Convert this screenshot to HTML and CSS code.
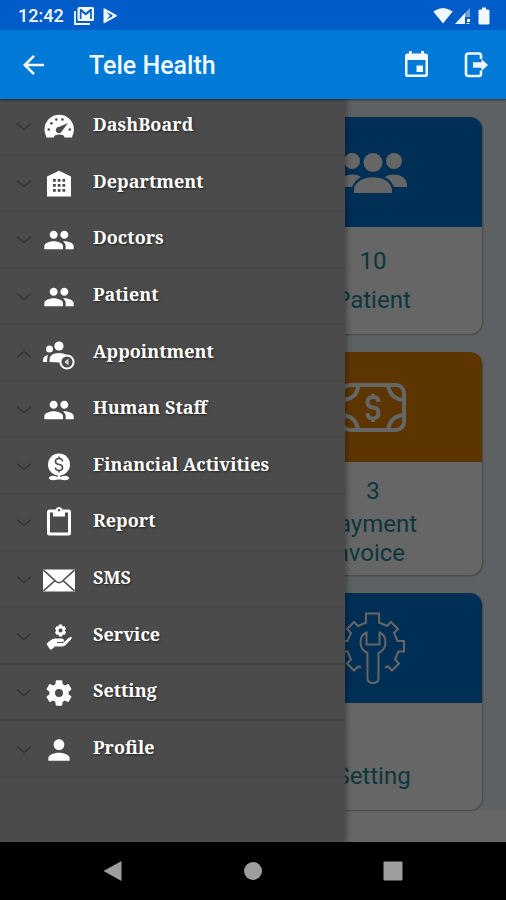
FILE: index.html
```html
<!DOCTYPE html>
<html lang="en">
<head>
<meta charset="utf-8">
<meta name="viewport" content="width=device-width, initial-scale=1">
<title>Tele Health</title>
<link rel="stylesheet" href="styles.css">
</head>
<body>
<svg class="symbols" aria-hidden="true">
  <symbol id="down" viewBox="0 0 16 10"><path d="M1 1.5l7 6 7-6" fill="none" stroke="currentColor" stroke-width="1.6"/></symbol>
  <symbol id="up" viewBox="0 0 16 10"><path d="M1 8.5l7-6 7 6" fill="none" stroke="currentColor" stroke-width="1.6"/></symbol>
  <symbol id="group" viewBox="0 0 24 24"><path d="M16 11c1.66 0 2.99-1.34 2.99-3S17.66 5 16 5c-1.66 0-3 1.34-3 3s1.34 3 3 3zm-8 0c1.66 0 2.99-1.34 2.99-3S9.66 5 8 5C6.34 5 5 6.34 5 8s1.34 3 3 3zm0 2c-2.33 0-7 1.17-7 3.5V19h14v-2.5c0-2.33-4.67-3.5-7-3.5zm8 0c-.29 0-.62.02-.97.05 1.16.84 1.97 1.97 1.97 3.45V19h6v-2.5c0-2.33-4.67-3.5-7-3.5z"/></symbol>
</svg>

<header class="top">
  <div class="status">
    <span class="clock">12:42</span>
    <svg class="status-icon" viewBox="0 0 20 18"><path d="M1 4v13h15" fill="none" stroke="currentColor" stroke-width="1.8"/><path fill-rule="evenodd" d="M5 0h13.500q1.500 0 1.500 1.500v11q0 1.500-1.500 1.500h-13.500q-1.500 0-1.500-1.500v-11q0-1.500 1.500-1.500zM5.800 2v10h1.700v-7l4.300 3.600 4.300-3.600v7h1.700v-10h-1.500l-4.500 3.800-4.500-3.800z"/></svg>
    <svg class="status-icon play" viewBox="0 0 16 18"><path fill-rule="evenodd" d="M1.500 2q0-1.200 1.200-.6l11.800 6.600q1 .7 0 1.400l-11.800 6.700q-1.200.6-1.200-.6zM4.500 5l3.500 3.800-3.500 3.700 5-2.500 1.200-1.200-1.200-1.300z"/></svg>
    <span class="spacer"></span>
    <svg class="status-icon wifi" viewBox="0 0 20 18"><path d="M10 16.500L.3 4.500Q10-2.500 19.700 4.500z"/></svg>
    <svg class="status-icon signal" viewBox="0 0 16 18"><path opacity=".45" d="M15 1v9h-5V6z"/><path d="M10 6v11H0zM12 12h3v3h-3zM11.500 16h3v1h-3z"/></svg>
    <svg class="status-icon battery" viewBox="0 0 12 18"><path d="M4 .5h4v2h2q1.500 0 1.500 1.500v12q0 1.500-1.500 1.500h-8q-1.500 0-1.500-1.500v-12q0-1.500 1.500-1.500h2z"/></svg>
  </div>
  <div class="app-bar">
    <button class="icon-button" type="button" aria-label="Back"><svg viewBox="0 0 28 28"><path d="M24 14H5.500M14 4.800L4.800 14l9.200 9.200" fill="none" stroke="currentColor" stroke-width="2.600"/></svg></button>
    <h1>Tele Health</h1>
    <button class="icon-button" type="button" aria-label="Calendar"><svg viewBox="0 0 28 28"><path fill-rule="evenodd" d="M7 0h2.800v2.500h9.400V0H22v2.500h1.500q2.500 0 2.500 2.500v18.500q0 2.500-2.500 2.500h-18q-2.500 0-2.500-2.500V5q0-2.500 2.500-2.500H7zM5.500 9v14.500h18V9z"/><path d="M14.500 14.500h6.500v6.500h-6.500z"/></svg></button>
    <button class="icon-button" type="button" aria-label="Log out"><svg viewBox="0 0 28 28"><path d="M19 8V5q0-2.500-2-2.500H6.500Q4 2.500 4 5v17.500q0 2.500 2.500 2.500H17q2 0 2-2.500v-3" fill="none" stroke="currentColor" stroke-width="2.600"/><path d="M11 11.200h8.500V8l6.500 6-6.500 6v-3.200H11z"/></svg></button>
  </div>
</header>

<main class="screen">
  <section class="dashboard">
    <article class="card">
      <div class="card-head"><svg viewBox="0 0 72 72"><circle cx="15" cy="25" r="8"/><circle cx="57" cy="25" r="8"/><circle cx="36" cy="26.500" r="9.500"/><path d="M17 57v-3c1-17 37-17 38 0v3zM2 51v-3c1-9 14-12 22-7q-6 3-9 10zM70 51v-3c-1-9-14-12-22-7q6 3 9 10z"/></svg></div>
      <div class="card-body"><strong>10</strong><span>Patient</span></div>
    </article>
    <article class="card tall">
      <div class="card-head orange"><svg class="line bold" viewBox="0 0 72 72"><rect x="5" y="14" width="62" height="45" rx="8"/><path d="M21 14q0 14-16 15M51 14q2 14 16 15M5 44q14 1 16 15M67 44q-14 1-16 15"/><path d="M41.500 31q0-5-5.500-5t-5.500 5 5.500 5.500 5.500 5.500-5.500 5.500-5.500-5.500M36 23v4M36 47v4"/></svg></div>
      <div class="card-body"><strong>3</strong><span>Payment&nbsp;<br>Invoice&nbsp;&nbsp;</span></div>
    </article>
    <article class="card">
      <div class="card-head"><svg class="line" viewBox="0 0 72 72"><path d="M24 55.500l-3-1-4 4-7-7 4-4-3.500-8H5V29h5.500l3.500-8-4-4 7-7 4 4 8-3.500V1.500h13V10.500l8 3.500 4-4 7 7-4 4 3.500 8H67v10.500h-5.500l-3.500 8 4 4-7 7-4-4-3 1"/><path d="M30.500 41v25q0 5 5.500 5t5.500-5V41q7-3 7-11 0-7-6-9.500v12h-13v-12q-6 2.500-6 9.500 0 8 7 11z"/></svg></div>
      <div class="card-body"><strong></strong><span>Setting</span></div>
    </article>
  </section>
  <div class="scrim"></div>

  <nav class="drawer" aria-label="Main menu">
    <ul class="menu">
      <li><button type="button"><svg class="chevron"><use href="#down"/></svg><svg class="icon" viewBox="0 0 32 32"><path fill-rule="evenodd" d="M3.500 26.500Q1.500 22 1.500 18.500a14.700 14.700 0 0 1 29.400 0q0 3.500-2 8h-7.400q0-3-5.300-3t-5.300 3zM25 12l-8.500 3.700a3.200 3.200 0 1 0 2.500 4.300z"/><g class="cut"><circle cx="5.800" cy="18.500" r="1.300"/><circle cx="8.500" cy="12.200" r="1.300"/><circle cx="13.300" cy="8.500" r="1.300"/><circle cx="19.500" cy="8.500" r="1.300"/><circle cx="26.800" cy="18.500" r="1.300"/></g></svg><span>DashBoard</span></button></li>
      <li><button type="button"><svg class="chevron"><use href="#down"/></svg><svg class="icon" viewBox="0 0 32 32"><path d="M4 28.500V8.500L16 2.800l12 5.700v20z"/><path class="cut" d="M10 11h2.800v2.800H10zM14.700 11h2.800v2.800h-2.800zM19.400 11h2.800v2.800h-2.800zM10 16h2.800v2.800H10zM14.700 16h2.800v2.800h-2.800zM19.400 16h2.800v2.800h-2.800zM10 21h2.800v2.800H10zM14.700 21h2.800v2.800h-2.800zM19.400 21h2.800v2.800h-2.800z"/></svg><span>Department</span></button></li>
      <li><button type="button"><svg class="chevron"><use href="#down"/></svg><svg class="icon"><use href="#group"/></svg><span>Doctors</span></button></li>
      <li><button type="button"><svg class="chevron"><use href="#down"/></svg><svg class="icon"><use href="#group"/></svg><span>Patient</span></button></li>
      <li><button type="button" aria-expanded="true"><svg class="chevron"><use href="#up"/></svg><svg class="icon" viewBox="0 0 32 32"><circle cx="6.500" cy="11" r="3.500"/><circle cx="16" cy="8" r="4.600"/><path d="M0 24v-2q0-4 5-5-1 3-1 7zM6.500 24v-2q0-7 9.500-7 6 0 8 2.500-6 1.500-6.500 7z"/><circle class="ring" cx="24" cy="24" r="6.600"/><path d="M25.500 20.500v7l-4-3.500z" opacity=".8"/></svg><span>Appointment</span></button></li>
      <li><button type="button"><svg class="chevron"><use href="#down"/></svg><svg class="icon"><use href="#group"/></svg><span>Human Staff</span></button></li>
      <li><button type="button"><svg class="chevron"><use href="#down"/></svg><svg class="icon" viewBox="0 0 32 32"><circle cx="16" cy="13.500" r="11"/><path d="M14.800 22h2.400v4q8-3 9 1.500-2 3-9 1h-2.400q-7 2-9-1 1-4.500 9-1.500z"/><path class="cut-line" d="M19.500 10.500q0-3-3.500-3t-3.500 3q0 2.500 3.500 3t3.500 3q0 3-3.500 3t-3.500-3M16 5.500v2M16 19.500v2"/></svg><span>Financial Activities</span></button></li>
      <li><button type="button"><svg class="chevron"><use href="#down"/></svg><svg class="icon" viewBox="0 0 32 32"><path fill-rule="evenodd" d="M6.500 2.500h6a3.700 3.700 0 0 1 7 0h6q2.500 0 2.500 2.500v21q0 2.500-2.500 2.500h-19Q4 28.500 4 26V5q0-2.500 2.500-2.500zM7 5.500v20h18V5.500h-3v4H10v-4zM16 2a1.200 1.200 0 1 0 .01 0z"/></svg><span>Report</span></button></li>
      <li><button type="button"><svg class="chevron"><use href="#down"/></svg><svg class="icon" viewBox="0 0 32 32"><path d="M0 5.500h32v22H0z"/><path class="cut-line" d="M.5 6L13 17.500q3 2.500 6 0L31.500 6M.5 27l11.500-10.500M31.500 27L20 16.500"/></svg><span>SMS</span></button></li>
      <li><button type="button"><svg class="chevron"><use href="#down"/></svg><svg class="icon" viewBox="0 0 32 32"><path fill-rule="evenodd" d="M16 3.500h3l.7 2 2-.3 1.300 2.600-1.200 1.700 1.200 1.700-1.300 2.600-2-.3-.7 2h-3l-.7-2-2 .3-1.300-2.600 1.200-1.700-1.200-1.700 1.300-2.600 2 .3zM17.500 7.500a2 2 0 1 0 .01 0z"/><path d="M3.500 23q4-5 8.500-5.500h6q3 0 3 2 0 1.500-3 1.500h-4v1h6l5.500-5q1.500-1 3.500-1-.5 2-2 3.500l-5 5q-1 1-3 1h-7l-3.500 3H7z"/></svg><span>Service</span></button></li>
      <li><button type="button"><svg class="chevron"><use href="#down"/></svg><svg class="icon" viewBox="0 0 24 24"><path d="M19.140 12.940c.04-.3.060-.61.060-.94 0-.32-.02-.64-.07-.94l2.030-1.580c.18-.14.23-.41.120-.61l-1.920-3.320c-.12-.22-.37-.29-.59-.22l-2.390.96c-.5-.38-1.030-.7-1.620-.94l-.36-2.540c-.04-.24-.24-.41-.48-.41h-3.840c-.24 0-.43.17-.47.41l-.36 2.540c-.59.24-1.130.57-1.620.94l-2.390-.96c-.22-.08-.47 0-.59.22L2.740 8.870c-.12.21-.08.47.12.61l2.030 1.580c-.05.3-.09.63-.09.94s.02.64.07.94l-2.030 1.580c-.18.14-.23.41-.12.61l1.920 3.320c.12.22.37.29.59.22l2.390-.96c.5.38 1.030.7 1.620.94l.36 2.540c.05.24.24.41.48.41h3.840c.24 0 .44-.17.47-.41l.36-2.540c.59-.24 1.130-.56 1.620-.94l2.390.96c.22.08.47 0 .59-.22l1.920-3.320c.12-.22.07-.47-.12-.61l-2.010-1.580zM12 15a3 3 0 1 1 0-6 3 3 0 0 1 0 6z"/></svg><span>Setting</span></button></li>
      <li><button type="button"><svg class="chevron"><use href="#down"/></svg><svg class="icon" viewBox="0 0 24 24"><path d="M12 12c2.210 0 4-1.790 4-4s-1.790-4-4-4-4 1.790-4 4 1.790 4 4 4zm0 2c-2.670 0-8 1.340-8 4v2h16v-2c0-2.660-5.330-4-8-4z"/></svg><span>Profile</span></button></li>
    </ul>
  </nav>
</main>

<footer class="system-nav">
  <button type="button" aria-label="System back"><svg viewBox="0 0 20 20"><path d="M.5 10L18.500 0v20z"/></svg></button>
  <button type="button" aria-label="Home"><svg viewBox="0 0 20 20"><circle cx="10" cy="10" r="9"/></svg></button>
  <button type="button" aria-label="Recent apps"><svg viewBox="0 0 20 20"><rect x=".5" y=".5" width="19" height="19" rx="1"/></svg></button>
</footer>
</body>
</html>
```
FILE: styles.css
```css
* { box-sizing: border-box; }

body {
  margin: 0;
  min-height: 100vh;
  display: flex;
  flex-direction: column;
  font-family: Roboto, "Liberation Sans", sans-serif;
  background: #fff;
}

button {
  margin: 0;
  padding: 0;
  border: 0;
  background: none;
  color: inherit;
  font: inherit;
}

svg { display: block; fill: currentColor; }
.symbols { position: absolute; width: 0; height: 0; }

/* Status and app bars */
.top {
  position: relative;
  z-index: 3;
  color: #f2f8ff;
  background: #0079d7;
  box-shadow: 0 1px 2px rgba(0, 0, 0, .5);
}

.status {
  display: flex;
  align-items: center;
  height: 30px;
  padding: 2px 16px 0 18px;
  background: #005cc8;
}

.clock { font-size: 18px; line-height: 20px; font-weight: 500; margin-right: 10px; }
.status-icon { width: 20px; height: 18px; }
.play { width: 16px; margin-left: 8px; }
.wifi { margin-right: 2px; }
.signal { width: 16px; margin-right: 7px; }
.battery { width: 12px; }
.spacer { flex: 1; }

.app-bar {
  display: flex;
  align-items: center;
  gap: 32px;
  height: 69px;
  padding: 0 16px 0 20px;
}

.app-bar h1 {
  flex: 1;
  margin: 0 0 0 9px;
  padding-top: 2px;
  font-size: 25px;
  line-height: 32px;
  font-weight: 500;
}

.icon-button svg { width: 28px; height: 28px; }

/* Dashboard */
.screen {
  position: relative;
  flex: 1;
  display: flex;
  flex-direction: column;
}

.dashboard {
  display: grid;
  grid-template-columns: 1fr 1fr;
  gap: 18px 22px;
  padding: 18px 24px 0;
  background: #ecf2f7;
}

.card {
  grid-column: 2;
  border-radius: 12px;
  overflow: hidden;
  background: #fff;
  box-shadow: 1px 1px 2px rgba(0, 0, 0, .3);
}

.card-head {
  display: grid;
  place-items: center;
  height: 110px;
  color: #fff;
  background: #0076d5;
}

.card-head.orange { background: #e68500; }
.card-head svg { width: 72px; height: 72px; }
.line { fill: none; stroke: currentColor; stroke-width: 2; }
.line.bold { stroke-width: 4; }

.card-body {
  display: flex;
  flex-direction: column;
  gap: 4px;
  min-height: 107px;
  padding-top: 20px;
  text-align: center;
  font-size: 24px;
  line-height: 29px;
  color: #1c8b98;
}

.card-body strong { min-height: 29px; font-weight: 400; }
.card-body span { padding-top: 6px; }
.tall .card-body { min-height: 113px; padding-top: 15px; }
.tall .card-body span { padding-top: 0; }

.scrim {
  position: absolute;
  inset: 0;
  background: rgba(0, 0, 0, .6);
}

/* Drawer */
.drawer {
  position: absolute;
  inset: 0 auto 0 0;
  width: 345px;
  max-width: 80%;
  padding-bottom: 64px;
  color: #fff;
  background: #4b4b4b;
  box-shadow: 1px 0 6px rgba(0, 0, 0, .4);
}

.menu {
  display: grid;
  grid-auto-rows: 1fr;
  height: 100%;
  margin: 0;
  padding: 0;
  list-style: none;
}

.menu li { border-bottom: 2px solid #454545; }

.menu button {
  display: flex;
  align-items: center;
  width: 100%;
  height: 100%;
  padding: 2px 0 0 16px;
  text-align: left;
}

.chevron { width: 16px; height: 10px; margin-right: 11px; color: #363636; }
.icon { width: 32px; height: 32px; margin-right: 18px; }
.cut { fill: #4b4b4b; }
.cut-line { fill: none; stroke: #4b4b4b; stroke-width: 1.6; }
.ring { fill: #4b4b4b; stroke: #fff; stroke-width: 2; }

.menu span {
  padding-bottom: 6px;
  font-family: "Noto Serif", "Droid Serif", "Liberation Serif", serif;
  font-size: 18px;
  line-height: 24px;
  font-weight: 700;
  text-shadow: 1px 1px 2px #222;
}

/* System navigation */
.system-nav {
  position: relative;
  display: grid;
  grid-template-columns: repeat(3, 1fr);
  height: 58px;
  padding: 0 43px;
  color: #9e9e9e;
  background: #000;
}

.system-nav button { display: grid; place-items: center; }
.system-nav svg { width: 20px; height: 20px; }
```
